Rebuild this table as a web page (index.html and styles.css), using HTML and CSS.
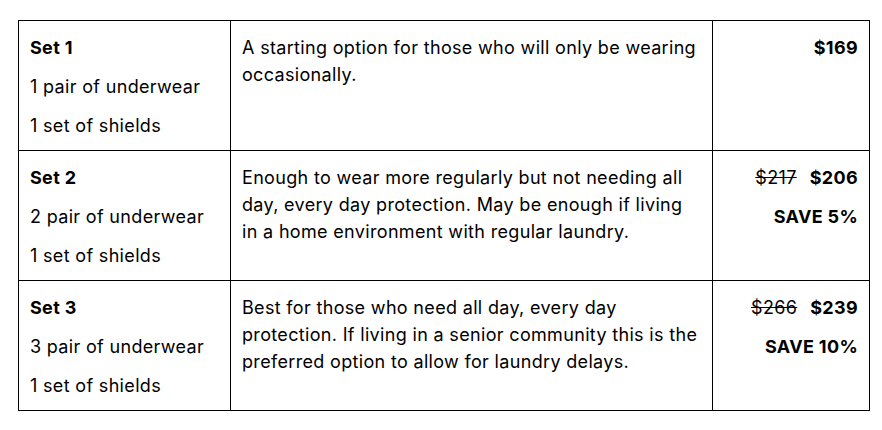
FILE: index.html
```html
<!DOCTYPE html>
<html lang="en">
<head>
<meta charset="utf-8">
<title>Sets</title>
<link rel="stylesheet" href="styles.css">
</head>
<body>
<div class="page">
  <table class="sets">
    <colgroup>
      <col class="c-name">
      <col class="c-desc">
      <col class="c-price">
    </colgroup>
    <tbody>
      <tr>
        <td class="name">
          <p class="title">Set 1</p>
          <p>1 pair of underwear</p>
          <p>1 set of shields</p>
        </td>
        <td class="desc"><p>A starting option for those who will only be wearing occasionally.</p></td>
        <td class="price">
          <p><b>$169</b></p>
        </td>
      </tr>
      <tr>
        <td class="name">
          <p class="title">Set 2</p>
          <p>2 pair of underwear</p>
          <p>1 set of shields</p>
        </td>
        <td class="desc"><p>Enough to wear more regularly but not needing all day, every day protection. May be enough if living in a home environment with regular laundry.</p></td>
        <td class="price">
          <p><s>$217</s><b>$206</b></p>
          <p><b>SAVE 5%</b></p>
        </td>
      </tr>
      <tr>
        <td class="name">
          <p class="title">Set 3</p>
          <p>3 pair of underwear</p>
          <p>1 set of shields</p>
        </td>
        <td class="desc"><p>Best for those who need all day, every day protection. If living in a senior community this is the preferred option to allow for laundry delays.</p></td>
        <td class="price">
          <p><s>$266</s><b>$239</b></p>
          <p><b>SAVE 10%</b></p>
        </td>
      </tr>
    </tbody>
  </table>
</div>
</body>
</html>
```
FILE: styles.css
```css
html, body {
  margin: 0;
  background: #fff;
}
.page {
  padding: 20px 0 0 18px;
  font-family: Inter, "Noto Sans", sans-serif;
  font-size: 18px;
  line-height: 27px;
  letter-spacing: 0.33px;
  color: #000;
}
.sets {
  border-collapse: collapse;
  table-layout: fixed;
  width: 851px;
}
.c-name { width: 212px; }
.c-desc { width: 482px; }
.c-price { width: 157px; }
.sets td {
  border: 1px solid #000;
  vertical-align: top;
  padding: 13px 11px 11px 11px;
}
.sets p {
  margin: 0 0 12px 0;
}
.sets p:last-child {
  margin-bottom: 0;
}
.title, .price b {
  font-weight: 700;
}
.price {
  text-align: right;
}
.price s {
  margin-right: 13px;
}
```
